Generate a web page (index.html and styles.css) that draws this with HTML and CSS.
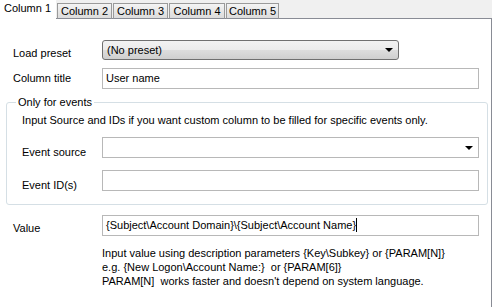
FILE: index.html
```html
<!DOCTYPE html>
<html>
<head>
<meta charset="utf-8">
<link rel="stylesheet" href="styles.css">
</head>
<body>
<div class="tabs">
  <div class="tab tab-active">Column 1</div>
  <div class="tab">Column 2</div>
  <div class="tab">Column 3</div>
  <div class="tab">Column 4</div>
  <div class="tab">Column 5</div>
</div>
<div class="panel">
  <div class="row row-preset">
    <div class="label">Load preset</div>
    <div class="combo combo-button"><span>(No preset)</span><span class="arrow"></span></div>
  </div>
  <div class="row row-title">
    <div class="label label-title">Column title</div>
    <div class="field">User name</div>
  </div>
  <fieldset class="group">
    <legend>Only for events</legend>
    <div class="hint">Input Source and IDs if you want custom column to be filled for specific events only.</div>
    <div class="row row-source">
      <div class="label label-inner">Event source</div>
      <div class="combo combo-edit"><span></span><span class="arrow"></span></div>
    </div>
    <div class="row row-ids">
      <div class="label label-inner">Event ID(s)</div>
      <div class="field"></div>
    </div>
  </fieldset>
  <div class="row row-value">
    <div class="label">Value</div>
    <div class="field">{Subject\Account Domain}\{Subject\Account Name}<span class="caret"></span></div>
  </div>
  <div class="help">
    <div>Input value using description parameters {Key\Subkey} or {PARAM[N]}</div>
    <div>e.g. {New Logon\Account Name:}&nbsp; or {PARAM[6]}</div>
    <div>PARAM[N]&nbsp; works faster and doesn't depend on system language.</div>
  </div>
</div>
</body>
</html>
```
FILE: styles.css
```css
* { box-sizing: border-box; }
html, body { margin: 0; padding: 0; }
body {
  background: #f0f0f0;
  font-family: "Liberation Sans", Arial, sans-serif;
  font-size: 11px;
  color: #000;
  width: 492px;
  height: 307px;
  overflow: hidden;
}
.tabs {
  display: flex;
  align-items: flex-end;
  height: 19px;
  position: relative;
  z-index: 1;
}
.tab {
  height: 16px;
  margin-left: 1px;
  padding: 0;
  line-height: 14px;
  white-space: nowrap;
  border: 1px solid #9a9a9a;
  border-bottom: 1px solid #898c95;
  background: linear-gradient(#f4f4f4, #e6e6e6 55%, #dcdcdc);
  width: 55px;
  text-align: center;
}
.tab-active {
  margin-left: 0;
  width: 56px;
  height: 19px;
  line-height: 16px;
  border: none;
  background: #fff;
  text-align: left;
  padding-left: 4px;
}
.tabs .tab:nth-child(3) { width: 55px; }
.tabs .tab:nth-child(4) { width: 56px; }
.tabs .tab:nth-child(5) { width: 53px; }
.panel {
  background: #fff;
  border-top: 1px solid #898c95;
  border-right: 1px solid #898c95;
  margin-top: -1px;
  height: 289px;
  padding: 21px 0 0 0;
}
.row {
  display: flex;
  align-items: flex-start;
}
.label {
  width: 102px;
  padding-left: 13px;
  padding-top: 7px;
  white-space: nowrap;
}
.label-title { padding-top: 4px; }
.label-inner {
  width: 80px;
  padding-left: 0;
  padding-top: 9px;
}
.combo {
  display: flex;
  align-items: center;
  justify-content: space-between;
  height: 20px;
}
.combo-button {
  width: 297px;
  border: 1px solid #707070;
  border-radius: 3px;
  background: linear-gradient(#f2f2f2 0%, #ebebeb 50%, #dddddd 51%, #cfcfcf 100%);
  padding: 0 4px 0 4px;
}
.combo-edit {
  width: 377px;
  height: 21px;
  border: 1px solid #b8b8b8;
  background: #fff;
  padding: 0 4px 0 4px;
}
.arrow {
  width: 0;
  height: 0;
  border-left: 4px solid transparent;
  border-right: 4px solid transparent;
  border-top: 4px solid #000;
  margin-right: 1px;
}
.field {
  width: 377px;
  height: 21px;
  border: 1px solid #b8b8b8;
  background: #fff;
  padding: 0 3px;
  line-height: 19px;
}
.row-title { margin-top: 8px; }
.group {
  margin: 7px 4px 0 6px;
  padding: 0 8px 11px 15px;
  border: 1px solid #d5dfe5;
  border-radius: 3px;
  height: 109px;
}
.group legend {
  padding: 0 2px;
  margin-left: -6px;
  line-height: 13px;
}
.hint {
  margin-top: 4px;
  line-height: 14px;
  white-space: nowrap;
}
.row-source { margin-top: 10px; }
.row-ids { margin-top: 12px; }
.row-value { margin-top: 10px; }
.caret {
  display: inline-block;
  width: 1px;
  height: 14px;
  background: #000;
  vertical-align: -3px;
}
.help {
  margin: 10px 0 0 102px;
  line-height: 14px;
}
```
